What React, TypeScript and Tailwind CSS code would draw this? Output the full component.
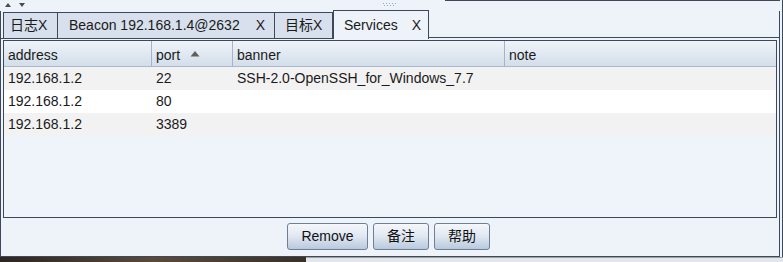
import React from "react";

const font = { fontFamily: '"Liberation Sans", Arial, "Noto Sans CJK SC", sans-serif' };

function Tab({ label, w, selected, pl }: { label: React.ReactNode; w: string; selected?: boolean; pl: string }) {
  if (selected) {
    return (
      <div className={`${w} h-[29px] bg-[#eef2f9] border-t border-l border-r border-[#3d4858] flex items-start pt-[4px] ${pl} text-[14px] text-[#1a1a1a] -ml-px`}>
        {label}
      </div>
    );
  }
  return (
    <div className={`${w} h-[27px] bg-[#d7e0ec] border-t border-l border-b border-[#3d4858] flex items-center ${pl} text-[14px] text-[#1a1a1a]`}>
      {label}
    </div>
  );
}

function Btn({ children, w }: { children: React.ReactNode; w: string }) {
  return (
    <div className={`${w} h-[27px] rounded-[3px] border border-[#6f7f95] bg-gradient-to-b from-[#f5f8fc] via-[#dfe7f1] to-[#b9c9dd] flex items-center justify-center text-[14px] text-[#111]`}>
      {children}
    </div>
  );
}

const rows = [
  { a: "192.168.1.2", p: "22", b: "SSH-2.0-OpenSSH_for_Windows_7.7", bg: "bg-[#f2f2f2]" },
  { a: "192.168.1.2", p: "80", b: "", bg: "bg-white" },
  { a: "192.168.1.2", p: "3389", b: "", bg: "bg-[#f2f2f2]" },
];

export default function App() {
  return (
    <div style={font} className="w-[783px] h-[262px] flex flex-col bg-[#eef2f9] overflow-hidden">
      <div className="h-[257px] flex flex-row">
        <div className="w-[780px] flex flex-col">
          {/* top strip */}
          <div className="h-[11px] flex flex-row">
            <div className="w-[445px] flex flex-row items-start">
              <svg width="8" height="6" className="ml-[4px] mt-[2px]" viewBox="0 0 8 6"><path d="M1 5 L4 1 L7 5 Z" fill="#4a4a4a" /></svg>
              <svg width="8" height="6" className="ml-[6px] mt-[2px]" viewBox="0 0 8 6"><path d="M1 1 L4 5 L7 1 Z" fill="#4a4a4a" /></svg>
              <div className="ml-[357px] mt-[3px] flex flex-col gap-[1px]">
                <div className="flex gap-[2px]">
                  {[0, 1, 2, 3, 4].map((i) => <div key={i} className="w-px h-px bg-[#9aa5b4]" />)}
                </div>
                <div className="flex gap-[2px] ml-[1px]">
                  {[0, 1, 2, 3].map((i) => <div key={i} className="w-px h-px bg-[#9aa5b4]" />)}
                </div>
              </div>
            </div>
            <div className="flex-1 border-t border-[#3d4858]" />
          </div>
          {/* tabs row */}
          <div className="h-[28px] flex flex-row items-end">
            <div className="w-[3px] h-[28px] border-l border-[#3d4858] flex flex-col justify-end"><div className="h-px bg-[#3d4858]" /></div>
            <Tab w="w-[54px]" pl="pl-[6px]" label={<span>日志X</span>} />
            <Tab w="w-[217px]" pl="pl-[11px]" label={<span className="flex w-full"><span>Beacon 192.168.1.4@2632</span><span className="ml-[16px]">X</span></span>} />
            <Tab w="w-[58px]" pl="pl-[10px]" label={<span>目标X</span>} />
            <div className="w-[2px] h-[27px] border-l border-b border-[#3d4858]" />
            <Tab selected w="w-[96px]" pl="pl-[10px]" label={<span className="flex"><span>Services</span><span className="ml-[14px]">X</span></span>} />
            <div className="flex-1 h-[28px] border-r border-[#3d4858] flex flex-col justify-end"><div className="h-px bg-[#3d4858] mb-px" /></div>
          </div>
          {/* content */}
          <div className="flex-1 border-l border-r border-b border-[#3d4858] px-[2px] pt-[1px] flex flex-col">
            <div className="h-[178px] border border-[#3d4858] bg-[#eff3fa] flex flex-col">
              <div className="h-[26px] flex flex-row bg-gradient-to-b from-[#f0f4f9] to-[#d3deea] border-b border-[#a9b9ce] text-[14px] text-[#1a1a1a]">
                <div className="w-[147px] pl-[4px] pt-[3px] flex items-center">address</div>
                <div className="w-[81px] border-l border-[#a3b4cb] pl-[4px] pt-[3px] flex items-center gap-[10px]">
                  <span>port</span>
                  <svg width="10" height="7" viewBox="0 0 10 7" className="-mt-[3px]"><path d="M0.5 6.5 L5 1 L9.5 6.5 Z" fill="#5f5f5f" /></svg>
                </div>
                <div className="w-[272px] border-l border-[#a3b4cb] pl-[4px] pt-[3px] flex items-center">banner</div>
                <div className="flex-1 border-l border-[#a3b4cb] pl-[4px] pt-[3px] flex items-center">note</div>
              </div>
              {rows.map((r, i) => (
                <div key={i} className={`h-[23px] flex flex-row items-center text-[14px] text-[#1a1a1a] ${r.bg}`}>
                  <div className="w-[147px] pl-[4px]">{r.a}</div>
                  <div className="w-[81px] pl-[5px]">{r.p}</div>
                  <div className="w-[272px] pl-[5px]">{r.b}</div>
                  <div className="flex-1" />
                </div>
              ))}
            </div>
            <div className="flex flex-row justify-center pt-[5px] gap-[5px] pr-[3px]">
              <Btn w="w-[81px]">Remove</Btn>
              <Btn w="w-[56px]">备注</Btn>
              <Btn w="w-[56px]">帮助</Btn>
            </div>
          </div>
        </div>
        <div className="w-[2px]" />
        <div className="w-px bg-[#3d4858]" />
      </div>
      <div className="h-[5px] flex flex-row">
        <div className="w-[306px] bg-gradient-to-r from-[#2d2520] via-[#5a4a3c] to-[#3a3028]" />
        <div className="flex-1 bg-[#e4e6ea] border-t border-[#9aa0a8]" />
      </div>
    </div>
  );
}
